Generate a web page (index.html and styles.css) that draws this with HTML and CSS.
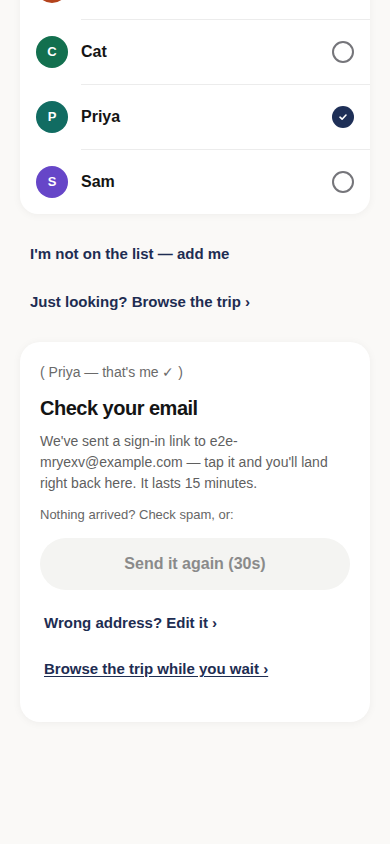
FILE: index.html
```html
<!DOCTYPE html>
<html lang="en">

<head>
    <meta charset="UTF-8">
    <meta name="viewport" content="width=device-width, initial-scale=1.0">
    <title>Who are you?</title>
    <link rel="stylesheet" href="styles.css">
</head>

<body>
    <main class="page">
        <!-- Traveller list -->
        <div class="card people">
            <div class="person">
                <span class="avatar avatar-orange">A</span>
                <div class="person-body">
                    <span class="person-name">Alex</span>
                    <span class="radio"></span>
                </div>
            </div>
            <div class="person">
                <span class="avatar avatar-green">C</span>
                <div class="person-body">
                    <span class="person-name">Cat</span>
                    <span class="radio"></span>
                </div>
            </div>
            <div class="person">
                <span class="avatar avatar-teal">P</span>
                <div class="person-body">
                    <span class="person-name">Priya</span>
                    <span class="radio radio-on">
                        <svg width="10" height="10" viewBox="0 0 10 10">
                            <path d="M2 5.2 L4.1 7.2 L8 3" fill="none" stroke="#fff" stroke-width="1.6"
                                stroke-linecap="round" stroke-linejoin="round" />
                        </svg>
                    </span>
                </div>
            </div>
            <div class="person">
                <span class="avatar avatar-purple">S</span>
                <div class="person-body">
                    <span class="person-name">Sam</span>
                    <span class="radio"></span>
                </div>
            </div>
        </div>

        <div class="links">
            <a class="link" href="#">I'm not on the list — add me</a>
            <a class="link" href="#">Just looking? Browse the trip ›</a>
        </div>

        <!-- Magic link sent -->
        <div class="card email">
            <p class="picked">( Priya — that's me ✓ )</p>
            <h1>Check your email</h1>
            <p class="lead">We've sent a sign-in link to e2e-mryexv@example.com — tap it and you'll land right back
                here. It lasts 15 minutes.</p>
            <p class="hint">Nothing arrived? Check spam, or:</p>
            <button class="resend" disabled>Send it again (30s)</button>
            <a class="link link-inner" href="#">Wrong address? Edit it ›</a>
            <a class="link link-inner link-underline" href="#">Browse the trip while you wait ›</a>
        </div>
    </main>
</body>

</html>
```

FILE: styles.css
```css
body {
    font-family: "Liberation Sans", Arial, sans-serif;
    background-color: #faf9f7;
    color: #111;
    margin: 0;
}

.page {
    padding: 0 20px 40px;
    margin-top: -46px;
}

.card {
    background: #fff;
    border-radius: 18px;
    box-shadow: 0 1px 8px rgba(0, 0, 0, 0.05);
}

.person {
    display: flex;
    align-items: center;
    gap: 13px;
    padding-left: 16px;
    height: 65px;
}

.person + .person .person-body {
    border-top: 1px solid #ececec;
}

.person-body {
    flex: 1;
    align-self: stretch;
    display: flex;
    align-items: center;
    justify-content: space-between;
    padding-right: 16px;
}

.person-name {
    font-size: 16px;
    font-weight: bold;
    color: #141414;
}

.avatar {
    width: 32px;
    height: 32px;
    border-radius: 50%;
    color: #fff;
    font-size: 13px;
    font-weight: bold;
    display: flex;
    align-items: center;
    justify-content: center;
    flex-shrink: 0;
}

.avatar-orange {
    background-color: #b4431c;
}

.avatar-green {
    background-color: #13704f;
}

.avatar-teal {
    background-color: #116c62;
}

.avatar-purple {
    background-color: #6646c8;
}

.radio {
    width: 22px;
    height: 22px;
    box-sizing: border-box;
    border: 2px solid #75757a;
    border-radius: 50%;
    display: flex;
    align-items: center;
    justify-content: center;
}

.radio-on {
    border: none;
    background-color: #1e2f57;
}

.links {
    display: flex;
    flex-direction: column;
    padding: 31px 10px 31px;
    gap: 30px;
}

.link {
    font-size: 15px;
    font-weight: bold;
    color: #1e2d52;
    text-decoration: none;
    line-height: 18px;
}

.email {
    border-radius: 20px;
    padding: 20px 20px 44px;
    display: flex;
    flex-direction: column;
}

.picked {
    margin: 0;
    font-size: 14px;
    color: #6a6a6a;
    line-height: 20px;
}

.email h1 {
    font-size: 20px;
    letter-spacing: -0.5px;
    margin: 14px 0 11px;
    color: #141414;
    line-height: 24px;
}

.lead {
    margin: 0;
    font-size: 14px;
    line-height: 21px;
    color: #5f5f5f;
}

.hint {
    margin: 12px 0 0;
    font-size: 13px;
    line-height: 18px;
    color: #666;
}

.resend {
    margin-top: 14px;
    height: 52px;
    flex-shrink: 0;
    border: none;
    border-radius: 26px;
    background-color: #f4f4f2;
    color: #8a8a8a;
    font-family: inherit;
    font-size: 16px;
    font-weight: bold;
}

.link-inner {
    padding-left: 4px;
    margin-top: 24px;
}

.link-inner + .link-inner {
    margin-top: 28px;
}

.link-underline {
    text-decoration: underline;
    text-underline-offset: 2px;
}
```
